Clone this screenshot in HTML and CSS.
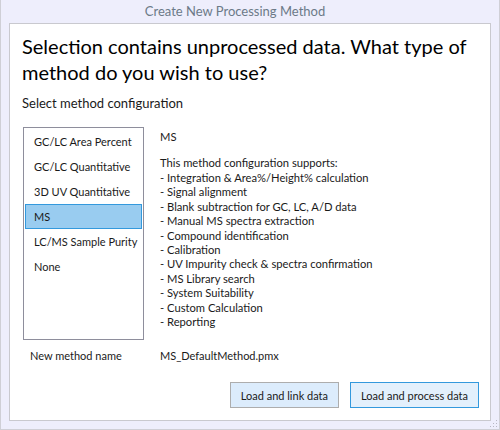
FILE: index.html
```html
<!DOCTYPE html>
<html lang="en">
<head>
    <meta charset="UTF-8">
    <title>Create New Processing Method</title>
    <link rel="stylesheet" href="styles.css">
</head>
<body>
    <div class="window">
        <div class="title">Create New Processing Method</div>

        <div class="panel">
            <h1>Selection contains unprocessed data. What type of method do you wish to use?</h1>
            <p class="label">Select method configuration</p>

            <div class="config">
                <ul class="method-list">
                    <li>GC/LC Area Percent</li>
                    <li>GC/LC Quantitative</li>
                    <li>3D UV Quantitative</li>
                    <li class="selected">MS</li>
                    <li>LC/MS Sample Purity</li>
                    <li>None</li>
                </ul>

                <div class="details">
                    <p class="details-name">MS</p>
                    <p class="details-intro">This method configuration supports:</p>
                    <ul class="features">
                        <li>- Integration &amp; Area%/Height% calculation</li>
                        <li>- Signal alignment</li>
                        <li>- Blank subtraction for GC, LC, A/D data</li>
                        <li>- Manual MS spectra extraction</li>
                        <li>- Compound identification</li>
                        <li>- Calibration</li>
                        <li>- UV Impurity check &amp; spectra confirmation</li>
                        <li>- MS Library search</li>
                        <li>- System Suitability</li>
                        <li>- Custom Calculation</li>
                        <li>- Reporting</li>
                    </ul>
                </div>
            </div>

            <div class="name-row">
                <span class="name-label">New method name</span>
                <span class="name-value">MS_DefaultMethod.pmx</span>
            </div>

            <div class="actions">
                <button>Load and link data</button>
                <button class="default">Load and process data</button>
            </div>
        </div>

        <!-- resize grip -->
        <svg class="grip" width="9" height="9" viewBox="0 0 9 9">
            <g fill="#b8b8c4">
                <rect x="7" y="1" width="1" height="1"/>
                <rect x="4" y="4" width="1" height="1"/>
                <rect x="7" y="4" width="1" height="1"/>
                <rect x="1" y="7" width="1" height="1"/>
                <rect x="4" y="7" width="1" height="1"/>
                <rect x="7" y="7" width="1" height="1"/>
            </g>
        </svg>
    </div>
</body>
</html>
```

FILE: styles.css
```css
body {
    margin: 0;
    padding: 0;
    font-family: 'Lato', 'Open Sans', sans-serif;
    color: #1a1a1a;
}

.window {
    position: relative;
    box-sizing: border-box;
    width: 500px;
    height: 430px;
    display: flex;
    flex-direction: column;
    background: #eeeefc;
    border: 1px solid #cfcfd6;
    border-top: none;
}

.title {
    height: 23px;
    line-height: 22px;
    padding-right: 30px;
    text-align: center;
    font-size: 13px;
    color: #6c7a88;
}

.panel {
    flex: 1;
    margin: 0 8px 8px 8px;
    padding: 9px 11px 0 12px;
    background: #fff;
    border: 1px solid #c9c9cf;
}

h1 {
    margin: 0;
    font-size: 20px;
    font-weight: normal;
    line-height: 26px;
    color: #000;
}

.label {
    margin: 9px 0 0 0;
    font-size: 13px;
    line-height: 18px;
}

.config {
    display: flex;
    gap: 16px;
    margin-top: 15px;
}

.method-list {
    box-sizing: border-box;
    width: 121px;
    height: 213px;
    margin: 0 0 0 1px;
    padding: 1px 1px;
    list-style: none;
    border: 1px solid #8e8e9c;
}

.method-list li {
    box-sizing: border-box;
    height: 25px;
    line-height: 23px;
    padding-left: 8px;
    font-size: 11px;
    border: 1px solid transparent;
    white-space: nowrap;
}

.method-list li.selected {
    background: #99ccf0;
    border-color: #3399dd;
}

.details {
    font-size: 11.2px;
}

.details p {
    margin: 0;
}

.details .details-name {
    margin-top: 2px;
    line-height: 16px;
}

.details .details-intro {
    margin-top: 10px;
    line-height: 16px;
}

.features {
    margin: 0;
    padding: 0;
    list-style: none;
    line-height: 14.4px;
}

.name-row {
    display: flex;
    margin-top: 8px;
    font-size: 11px;
    line-height: 16px;
}

.name-label {
    width: 130px;
    padding-left: 8px;
}

.actions {
    display: flex;
    justify-content: flex-end;
    gap: 11px;
    margin-top: 18px;
}

button {
    height: 26px;
    padding: 0 10px;
    font-family: inherit;
    font-size: 11px;
    color: #1a1a1a;
    background: #dcecfc;
    border: 1px solid #adadad;
    border-radius: 0;
}

button.default {
    background: #e3f0fc;
    border-color: #3399dd;
}

.grip {
    position: absolute;
    right: 1px;
    bottom: 1px;
}
```
